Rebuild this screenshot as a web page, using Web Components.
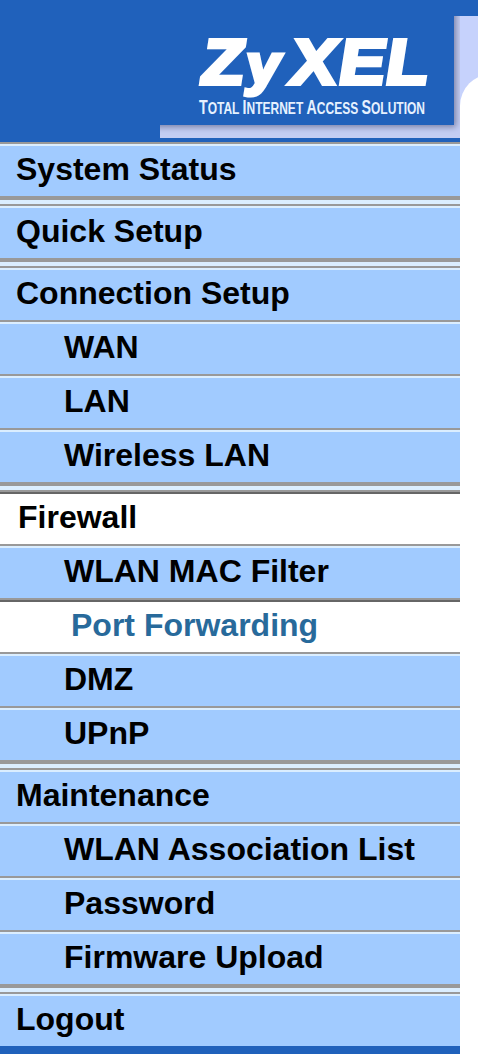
<!DOCTYPE html>
<html lang="en">
<head>
<meta charset="utf-8">
<title>ZyXEL</title>
<style>
html,body{margin:0;padding:0;background:#fff}
body{font-family:"Liberation Sans",Arial,sans-serif}
</style>
</head>
<body>
<router-page>
  <brand-header slot="header"></brand-header>
  <menu-group><menu-item>System Status</menu-item></menu-group>
  <menu-group><menu-item>Quick Setup</menu-item></menu-group>
  <menu-group>
    <menu-item>Connection Setup</menu-item>
    <menu-item sub>WAN</menu-item>
    <menu-item sub>LAN</menu-item>
    <menu-item sub>Wireless LAN</menu-item>
  </menu-group>
  <menu-group>
    <menu-item open>Firewall</menu-item>
    <menu-item sub>WLAN MAC Filter</menu-item>
    <menu-item sub open current>Port Forwarding</menu-item>
    <menu-item sub>DMZ</menu-item>
    <menu-item sub>UPnP</menu-item>
  </menu-group>
  <menu-group>
    <menu-item>Maintenance</menu-item>
    <menu-item sub>WLAN Association List</menu-item>
    <menu-item sub>Password</menu-item>
    <menu-item sub>Firmware Upload</menu-item>
  </menu-group>
  <menu-group last><menu-item>Logout</menu-item></menu-group>
</router-page>
<script>
class Base extends HTMLElement{
  constructor(){
    super();
    this.attachShadow({mode:'open'}).innerHTML=this.constructor.markup;
  }
}
class RouterPage extends Base{
  static markup=`<style>
    :host{display:block;width:478px;height:1054px;overflow:hidden;background:#fff}
    nav{width:460px;height:912px;padding-bottom:4px;background:#2061bb;box-sizing:border-box}
  </style><slot name="header"></slot><nav><slot></slot></nav>`;
}
class BrandHeader extends Base{
  static markup=`<style>
    :host{display:block;height:142px}
    svg{display:block}
    text{fill:#fff}
    .brand{font:italic bold 64px "Liberation Sans",Arial,sans-serif;stroke:#fff;stroke-width:4px}
    .low{font-size:56px}
    .tag{font:bold 16.5px "Liberation Sans",Arial,sans-serif;fill:#e6f1ff}
    .cap{font-size:19.5px}
  </style>
  <svg width="478" height="142" viewBox="0 0 478 142">
    <defs>
      <filter id="soft" x="-10%" y="-10%" width="120%" height="125%"><feGaussianBlur stdDeviation="3"/></filter>
      <clipPath id="panel"><rect x="160" y="16" width="300" height="122"/></clipPath>
    </defs>
    <rect width="460" height="142" fill="#2061bb"/>
    <rect x="460" width="18" height="16" fill="#2061bb"/>
    <rect x="460" y="16" width="18" height="90" fill="#c6d2fc"/>
    <circle cx="492" cy="106" r="32" fill="#fff"/>
    <g clip-path="url(#panel)">
      <rect x="160" y="16" width="300" height="122" fill="#c3cdf3"/>
      <rect x="150" y="0" width="306" height="127" fill="#777fa4" filter="url(#soft)"/>
      <rect x="160" y="16" width="294" height="109" fill="#2061bb"/>
    </g>
    <text class="brand" transform="translate(199 84) skewX(3) scale(1.08 1)" y="0" x="3.5 45 86 130.5 174">Z<tspan class="low">y</tspan>XEL</text>
    <text class="tag" x="199" y="114" textLength="226" lengthAdjust="spacingAndGlyphs"><tspan class="cap">T</tspan>OTAL <tspan class="cap">I</tspan>NTERNET <tspan class="cap">A</tspan>CCESS <tspan class="cap">S</tspan>OLUTION</text>
  </svg>`;
}
class MenuGroup extends Base{
  static markup=`<style>
    :host{display:block;border-bottom:4px solid #dbeeff}
    div{border-bottom:4px solid #999}
    :host([last]),:host([last]) div{border-bottom:0}
  </style><div><slot></slot></div>`;
}
class MenuItem extends Base{
  static markup=`<style>
    :host{display:block;box-sizing:border-box;height:54px;padding-left:16px;border-top:2px solid #999;
      box-shadow:inset 0 2px #dbeeff;background:#a1cbff;color:#000;
      font-weight:bold;font-size:32px;line-height:50px;white-space:nowrap}
    :host([sub]){padding-left:64px}
    :host([open]){padding-left:18px;background:#fff;box-shadow:inset 0 2px #666}
    :host([current]){padding-left:71px;color:#286a9b}
  </style><slot></slot>`;
}
customElements.define('router-page',RouterPage);
customElements.define('brand-header',BrandHeader);
customElements.define('menu-group',MenuGroup);
customElements.define('menu-item',MenuItem);
</script>
</body>
</html>
